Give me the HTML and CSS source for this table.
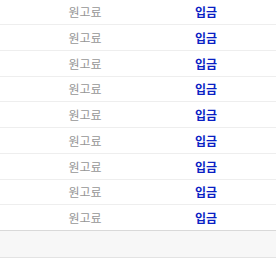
FILE: index.html
```html
<!DOCTYPE html>
<html lang="ko">
<head>
<meta charset="utf-8">
<link rel="stylesheet" href="styles.css">
</head>
<body>
<div class="list">
  <div class="row"><span class="kind">원고료</span><span class="type">입금</span><span></span></div>
  <div class="row"><span class="kind">원고료</span><span class="type">입금</span><span></span></div>
  <div class="row"><span class="kind">원고료</span><span class="type">입금</span><span></span></div>
  <div class="row"><span class="kind">원고료</span><span class="type">입금</span><span></span></div>
  <div class="row"><span class="kind">원고료</span><span class="type">입금</span><span></span></div>
  <div class="row"><span class="kind">원고료</span><span class="type">입금</span><span></span></div>
  <div class="row"><span class="kind">원고료</span><span class="type">입금</span><span></span></div>
  <div class="row"><span class="kind">원고료</span><span class="type">입금</span><span></span></div>
  <div class="row last"><span class="kind">원고료</span><span class="type">입금</span><span></span></div>
</div>
<div class="footer"></div>
</body>
</html>
```
FILE: styles.css
```css
html, body {
  margin: 0;
  padding: 0;
  background: #fff;
}
body {
  font-family: "Noto Sans CJK KR", "Noto Sans", sans-serif;
  font-size: 12px;
}
.list {
  margin-top: -0.75px;
}
.row {
  display: grid;
  grid-template-columns: 170px 72px 1fr;
  align-items: center;
  height: 24.75px;
  border-bottom: 1px solid #eeeeee;
}
.row.last {
  border-bottom: 1px solid #d9d9d9;
}
.kind {
  text-align: center;
  color: #969696;
}
.type {
  text-align: center;
  color: #0a1fc4;
  font-weight: bold;
}
.footer {
  height: 25.5px;
  background: #f7f7f7;
  border-bottom: 1px solid #e3e3e3;
}
```
